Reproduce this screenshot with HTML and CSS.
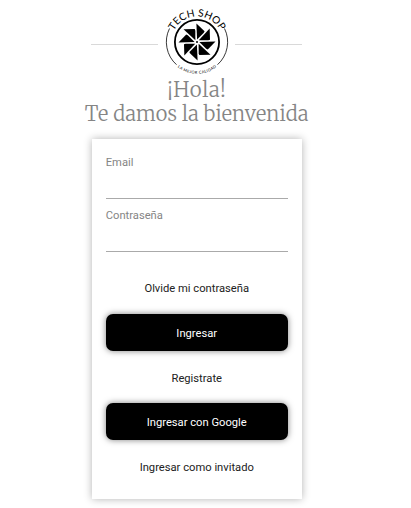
FILE: index.html
```html
<!DOCTYPE html>
<html lang="es">
<head>
<meta charset="utf-8">
<title>Tech Shop</title>
<link rel="stylesheet" href="styles.css">
</head>
<body>
<main class="page">
  <header class="brand">
    <span class="rule"></span>
    <svg class="logo" viewBox="-35 -35 70 70" role="img" aria-label="Tech Shop">
      <defs>
        <path id="top-arc" d="M-26 .5A26 26 0 0 1 26 .5"/>
        <path id="bottom-arc" d="M-31.8 0A31.8 31.8 0 0 0 31.8 0"/>
        <path id="blade" d="M-.6-18.5L7.6-10.8L6.8-9.2L.1-2.4Z"/>
      </defs>
      <circle class="ring" r="22.1"/>
      <path class="arc" d="M-27.5-13.5A30.6 30.6 0 0 0-20.5 22.7M27.5-13.5A30.6 30.6 0 0 1 20.5 22.7"/>
      <use href="#blade"/>
      <use href="#blade" transform="rotate(45)"/>
      <use href="#blade" transform="rotate(90)"/>
      <use href="#blade" transform="rotate(135)"/>
      <use href="#blade" transform="rotate(180)"/>
      <use href="#blade" transform="rotate(225)"/>
      <use href="#blade" transform="rotate(270)"/>
      <use href="#blade" transform="rotate(315)"/>
      <circle r="1"/>
      <text class="name"><textPath href="#top-arc" startOffset="50%" textLength="57">TECH SHOP</textPath></text>
      <text class="tagline"><textPath href="#bottom-arc" startOffset="50%" textLength="42">LA MEJOR CALIDAD</textPath></text>
    </svg>
    <span class="rule"></span>
  </header>
  <h1 class="title"><span class="hello">¡Hola!</span><br>Te damos la bienvenida</h1>
  <form class="card">
    <label class="field">Email<input type="email"></label>
    <label class="field">Contraseña<input type="password"></label>
    <a class="link forgot">Olvide mi contraseña</a>
    <button class="button" type="button">Ingresar</button>
    <a class="link">Registrate</a>
    <button class="button" type="button">Ingresar con Google</button>
    <a class="link">Ingresar como invitado</a>
  </form>
</main>
</body>
</html>
```
FILE: styles.css
```css
* {
  box-sizing: border-box;
}

body {
  margin: 0;
  background: #fff;
  font-family: Roboto, sans-serif;
  font-size: 11.2px;
}

.page {
  display: flex;
  flex-direction: column;
  align-items: center;
  width: 393.5px;
  height: 508px;
  padding-top: 7px;
}

.brand {
  display: flex;
  align-items: center;
  justify-content: space-between;
  width: 211px;
  height: 70px;
}

.rule {
  width: 67px;
  height: 1px;
  margin-top: 4px;
  background: #d9d9d9;
}

.logo {
  width: 70px;
  height: 70px;
  flex: none;
  overflow: visible;
}

.ring {
  fill: none;
  stroke: #000;
  stroke-width: 1.8;
}

.arc {
  fill: none;
  stroke: #222;
  stroke-width: 0.9;
}

.name {
  font: 10.2px Lato, sans-serif;
  text-anchor: middle;
}

.tagline {
  font: 3.9px Lato, sans-serif;
  text-anchor: middle;
}

.title {
  margin: 1px 0 0;
  color: #858585;
  font: 300 20px/24px Merriweather, "DejaVu Serif", serif;
  letter-spacing: 0.15px;
  text-align: center;
  white-space: nowrap;
}

.hello {
  font-size: 20.5px;
  line-height: 23px;
  letter-spacing: 0.7px;
}

.card {
  display: flex;
  flex-direction: column;
  width: 210px;
  height: 360px;
  margin-top: 13px;
  padding: 14px;
  background: #fff;
  box-shadow: 0 0 8px rgba(0, 0, 0, 0.3);
}

.field {
  display: block;
  flex: none;
  height: 53px;
  padding-top: 1px;
  color: #858585;
  line-height: 18px;
}

.field input {
  display: block;
  width: 100%;
  height: 27px;
  padding: 0;
  border: 0;
  border-bottom: 1px solid #aaa;
  background: none;
  outline: 0;
}

.link {
  flex: none;
  height: 52px;
  color: #222;
  line-height: 55px;
  text-align: center;
}

.forgot {
  height: 55px;
  line-height: 60px;
}

.button {
  flex: none;
  height: 37px;
  padding: 2px 0 0;
  border: 0;
  border-radius: 7px;
  background: #000;
  box-shadow: 0 0 6px rgba(0, 0, 0, 0.5);
  color: #fff;
  font: 400 11.2px Roboto, sans-serif;
}
```
